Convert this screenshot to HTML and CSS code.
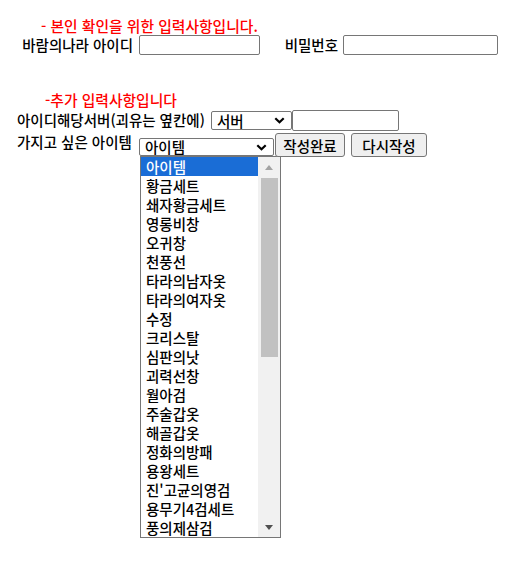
FILE: index.html
```html
<!DOCTYPE html>
<html lang="ko">
<head>
<meta charset="utf-8">
<title>입력사항</title>
<link rel="stylesheet" href="styles.css">
</head>
<body>
<form class="page">
  <p class="note note-1">- 본인 확인을 위한 입력사항입니다.</p>
  <div class="row row-1">
    <label class="lbl lbl-id">바람의나라 아이디</label>
    <input type="text" class="field field-id">
    <label class="lbl lbl-pw">비밀번호</label>
    <input type="password" class="field field-pw">
  </div>

  <p class="note note-2">-추가 입력사항입니다</p>
  <div class="row row-2">
    <label class="lbl lbl-server">아이디해당서버(괴유는 옆칸에)</label>
    <select class="sel sel-server"><option>서버</option></select>
    <input type="text" class="field field-server">
  </div>
  <div class="row row-3">
    <label class="lbl lbl-item">가지고 싶은 아이템</label>
    <select class="sel sel-item"><option>아이템</option></select>
    <button type="button" class="btn btn-submit">작성완료</button>
    <button type="button" class="btn btn-reset">다시작성</button>
  </div>
  <div class="listbox">
    <ul class="lb-list">
      <li class="lb-item selected">아이템</li>
      <li class="lb-item">황금세트</li>
      <li class="lb-item">쇄자황금세트</li>
      <li class="lb-item">영롱비창</li>
      <li class="lb-item">오귀창</li>
      <li class="lb-item">천풍선</li>
      <li class="lb-item">타라의남자옷</li>
      <li class="lb-item">타라의여자옷</li>
      <li class="lb-item">수정</li>
      <li class="lb-item">크리스탈</li>
      <li class="lb-item">심판의낫</li>
      <li class="lb-item">괴력선창</li>
      <li class="lb-item">월아검</li>
      <li class="lb-item">주술갑옷</li>
      <li class="lb-item">해골갑옷</li>
      <li class="lb-item">정화의방패</li>
      <li class="lb-item">용왕세트</li>
      <li class="lb-item">진'고균의영검</li>
      <li class="lb-item">용무기4검세트</li>
      <li class="lb-item">풍의제삼검</li>
    </ul>
    <div class="sb">
      <div class="sb-btn"><span class="tri tri-up"></span></div>
      <div class="sb-track"><div class="sb-thumb"></div></div>
      <div class="sb-btn"><span class="tri tri-down"></span></div>
    </div>
  </div>
</form>
</body>
</html>
```

FILE: styles.css
```css
html, body {
  margin: 0;
  padding: 0;
  background: #ffffff;
}

body {
  font-family: "Noto Sans CJK KR", "Noto Sans KR", "Noto Sans CJK JP", sans-serif;
  font-size: 14.5px;
  font-weight: 500;
  color: #000000;
}

.page {
  margin: 0;
  padding: 0;
}

.note {
  margin: 0;
  color: #ff0000;
  font-size: 14.8px;
  line-height: 18px;
  white-space: nowrap;
}

.note-1 {
  margin-top: 17px;
  padding-left: 41px;
}

.note-2 {
  margin-top: 36px;
  padding-left: 45px;
}

.row {
  display: flex;
  align-items: flex-start;
  white-space: nowrap;
}

.lbl {
  display: block;
  flex: none;
  line-height: 20px;
}

/* row 1 */
.row-1 {
  height: 20px;
}

.lbl-id {
  width: 116px;
  margin-left: 17px;
  margin-right: 6px;
  text-align: right;
}

.lbl-pw {
  width: 78px;
  margin-right: 5px;
  text-align: right;
}

.field {
  box-sizing: border-box;
  margin: 0;
  padding: 1px 3px;
  border: 1px solid #767676;
  border-radius: 2px;
  background: #ffffff;
  font: inherit;
  flex: none;
}

.field-id {
  width: 121px;
  height: 20px;
}

.field-pw {
  width: 155px;
  height: 20px;
}

/* row 2 */
.row-2 {
  margin-top: 1px;
  height: 21px;
}

.lbl-server {
  width: 188px;
  margin-left: 17px;
  margin-right: 6px;
  line-height: 20px;
}

.sel {
  -webkit-appearance: none;
  appearance: none;
  box-sizing: border-box;
  margin: 0;
  padding: 0 18px 0 5px;
  border: 1px solid #767676;
  border-radius: 2px;
  background-color: #ffffff;
  background-image: url("data:image/svg+xml,%3Csvg xmlns='http://www.w3.org/2000/svg' width='11' height='7' viewBox='0 0 11 7'%3E%3Cpath d='M1.3 1.3 L5.5 5.3 L9.7 1.3' fill='none' stroke='%23000' stroke-width='2.2'/%3E%3C/svg%3E");
  background-repeat: no-repeat;
  background-position: right 6px center;
  background-size: 11px 7px;
  font-family: inherit;
  font-weight: 500;
  font-size: 14.5px;
  line-height: 16px;
  color: #000000;
  flex: none;
  overflow: hidden;
}

.sel-server {
  width: 81px;
  height: 19px;
  margin-top: 1px;
}

.field-server {
  width: 107px;
  height: 21px;
}

/* row 3 */
.row-3 {
  margin-top: 2px;
  height: 24px;
}

.lbl-item {
  width: 116px;
  margin-left: 17px;
  margin-right: 6px;
  line-height: 18px;
}

.sel-item {
  width: 135px;
  height: 18px;
  margin-top: 5px;
}

.btn {
  box-sizing: border-box;
  margin: 0;
  height: 24px;
  padding: 0;
  border: 1px solid #767676;
  border-radius: 3px;
  background: #efefef;
  font-family: inherit;
  font-weight: 500;
  font-size: 14.5px;
  color: #000000;
  flex: none;
}

.btn-submit {
  width: 70px;
  margin-left: 1px;
}

.btn-reset {
  width: 76px;
  margin-left: 6px;
}

/* opened item list under the select */
.listbox {
  width: 141px;
  height: 382px;
  margin-top: -1px;
  margin-left: 140px;
  box-sizing: border-box;
  border: 1px solid #767676;
  background: #ffffff;
  display: flex;
}

.lb-list {
  list-style: none;
  margin: 0;
  padding: 0;
  flex: 1;
  overflow: hidden;
}

.lb-item {
  height: 19px;
  line-height: 19px;
  padding-left: 5px;
  font-size: 14.5px;
  color: #000000;
  white-space: nowrap;
}

.lb-item.selected {
  background: #1a6dd6;
  color: #ffffff;
}

.sb {
  width: 22px;
  flex: none;
  background: #f1f1f1;
  display: flex;
  flex-direction: column;
}

.sb-btn {
  height: 20px;
  display: flex;
  align-items: center;
  justify-content: center;
  flex: none;
}

.sb-track {
  flex: 1;
  padding-top: 1px;
}

.sb-thumb {
  height: 179px;
  margin-left: 3px;
  margin-right: 2px;
  background: #c1c1c1;
}

.tri {
  display: block;
  width: 0;
  height: 0;
  border-left: 4px solid transparent;
  border-right: 4px solid transparent;
}

.tri-up {
  border-bottom: 5px solid #a3a3a3;
}

.tri-down {
  border-top: 5px solid #505050;
}
```
